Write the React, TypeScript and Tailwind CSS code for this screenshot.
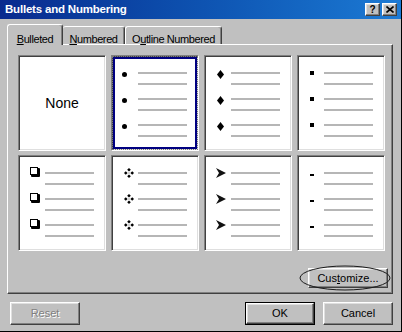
import React from "react";

const Circle = () => <div className="h-[5px] w-[5px] rounded-full bg-black" />;

const Diamond = () => (
  <svg width="7" height="9" viewBox="0 0 7 9" className="block">
    <polygon points="3.5,0 7,4.5 3.5,9 0,4.5" fill="#000" />
  </svg>
);

const SmallSquare = () => <div className="h-[4px] w-[4px] bg-black" />;

const HollowSquare = () => (
  <svg width="10" height="10" viewBox="0 0 10 10" className="block">
    <rect x="1" y="1" width="9" height="9" rx="1" fill="#000" />
    <rect x="0" y="0" width="8" height="8" fill="#000" />
    <rect x="1" y="1" width="6" height="6" fill="#fff" />
  </svg>
);

const FourDots = () => (
  <svg width="10" height="10" viewBox="0 0 10 10" className="block">
    <polygon points="5,0 6.8,1.8 5,3.6 3.2,1.8" fill="#000" />
    <polygon points="1.8,3.2 3.6,5 1.8,6.8 0,5" fill="#000" />
    <polygon points="8.2,3.2 10,5 8.2,6.8 6.4,5" fill="#000" />
    <polygon points="5,6.4 6.8,8.2 5,10 3.2,8.2" fill="#000" />
    <rect x="4.5" y="4.5" width="1" height="1" fill="#555" />
  </svg>
);

const Arrow = () => (
  <svg width="10" height="10" viewBox="0 0 10 10" className="block">
    <polygon points="0,0 10,5 0,10 3,5" fill="#111" />
  </svg>
);

const Dash = () => <div className="h-[2px] w-[4px] bg-black" />;

type CellDef = {
  bullet?: React.ReactNode;
  cls?: string;
  none?: boolean;
  selected?: boolean;
};

const cells: CellDef[] = [
  { none: true },
  { bullet: <Circle />, cls: "ml-[10px] mt-[2px]", selected: true },
  { bullet: <Diamond />, cls: "ml-[12px] mt-[3px]" },
  { bullet: <SmallSquare />, cls: "ml-[12px] -mt-[1px]" },
  { bullet: <HollowSquare />, cls: "ml-[11px] -mt-[2px]" },
  { bullet: <FourDots />, cls: "ml-[12px]" },
  { bullet: <Arrow />, cls: "ml-[11px] -mt-[1px]" },
  { bullet: <Dash />, cls: "ml-[12px] mt-[3px]" },
];

function Cell({ c }: { c: CellDef }) {
  return (
    <div className="relative h-[96px] border border-t-[#808080] border-l-[#808080] border-r-white border-b-white bg-white shadow-[inset_1px_1px_0_#404040,inset_-1px_-1px_0_#dfdfdf]">
      {c.none ? (
        <div className="flex h-full items-center justify-center text-[14px] text-black">None</div>
      ) : (
        <div className="flex flex-col gap-[13px] pt-[16px]">
          {[0, 1, 2].map((i) => (
            <div key={i} className="flex">
              <div className="flex h-[2px] w-[26px] items-center">
                <div className={c.cls}>{c.bullet}</div>
              </div>
              <div className="flex flex-col gap-[9px]">
                <div className="h-[2px] w-[49px] bg-[#b6b6b6]" />
                <div className="h-[2px] w-[49px] bg-[#b6b6b6]" />
              </div>
            </div>
          ))}
        </div>
      )}
      {c.selected && (
        <div className="pointer-events-none absolute inset-0 border border-dotted border-[#7a7a7a]">
          <div className="h-full w-full border-2 border-[#000080]" />
        </div>
      )}
    </div>
  );
}

const raised =
  "border border-t-white border-l-white border-r-[#404040] border-b-[#404040] shadow-[inset_-1px_-1px_0_#808080,inset_1px_1px_0_#dfdfdf] bg-[#c0c0c0]";

export default function App() {
  return (
    <div className="flex h-[332px] w-[402px] flex-col overflow-hidden border-r border-b border-r-black border-b-black bg-[#c0c0c0] font-['Liberation_Sans',Arial,sans-serif] text-[11px] text-black">
      {/* Title bar */}
      <div className="flex h-[19px] shrink-0 items-center bg-linear-to-r from-[#0a2a8e] to-[#1c7ad4] pl-[5px] pr-[4px]">
        <span className="text-[11.5px] font-bold tracking-[-0.2px] text-white">Bullets and Numbering</span>
        <div className="ml-auto flex gap-[2px]">
          <div className={`flex h-[13px] w-[15px] items-center justify-center text-[10px] font-bold leading-none ${raised}`}>
            ?
          </div>
          <div className={`flex h-[13px] w-[15px] items-center justify-center ${raised}`}>
            <svg width="8" height="7" viewBox="0 0 8 7" className="block">
              <path d="M0.5 0.5 L7.5 6.5 M7.5 0.5 L0.5 6.5" stroke="#000" strokeWidth="1.6" />
            </svg>
          </div>
        </div>
      </div>

      {/* Tabs + panel */}
      <div className="px-[7px] pt-[5px]">
        <div className="flex h-[20px] items-end tracking-[-0.4px]">
          <div className="relative z-10 -mb-px flex h-[21px] w-[56px] justify-center rounded-t-[3px] border-l border-t border-r border-l-white border-t-white border-r-[#404040] bg-[#c0c0c0] pt-[6px] shadow-[inset_-1px_0_0_#808080]">
            <span>
              <span className="underline underline-offset-[1px]">B</span>ulleted
            </span>
          </div>
          <div className="flex h-[18px] w-[62px] justify-center rounded-t-[3px] border-t border-r border-t-white border-r-[#404040] pt-[4px] shadow-[inset_-1px_0_0_#808080]">
            <span>
              <span className="underline underline-offset-[1px]">N</span>umbered
            </span>
          </div>
          <div className="flex h-[18px] w-[97px] justify-center rounded-t-[3px] border-l border-t border-r border-l-white border-t-white border-r-[#404040] pt-[4px] shadow-[inset_-1px_0_0_#808080]">
            <span>
              O<span className="underline underline-offset-[1px]">u</span>tline Numbered
            </span>
          </div>
        </div>
        <div className="h-[250px] w-[386px] border border-t-white border-l-white border-r-[#404040] border-b-[#404040] pl-[10px] pt-[10px] shadow-[inset_-1px_-1px_0_#808080]">
          <div className="grid grid-cols-[repeat(4,88px)] gap-x-[5px] gap-y-[4px]">
            {cells.map((c, i) => (
              <Cell key={i} c={c} />
            ))}
          </div>
          <div className="mt-[17px] flex justify-end pr-[4px]">
            <div className="relative">
              <button className={`h-[20px] w-[80px] ${raised} text-[11px]`}>
                Cus<span className="underline underline-offset-[1px]">t</span>omize...
              </button>
              <svg
                width="92"
                height="26"
                viewBox="0 0 92 26"
                className="pointer-events-none absolute -left-[9px] -top-[3px]"
              >
                <ellipse cx="46" cy="13" rx="45" ry="12" fill="none" stroke="#1a1a1a" strokeWidth="1" />
              </svg>
            </div>
          </div>
        </div>
      </div>

      {/* Bottom buttons */}
      <div className="mt-[8px] flex pl-[10px] pr-[8px]">
        <button className={`h-[23px] w-[70px] ${raised} text-[#808080] [text-shadow:1px_1px_0_#fff]`}>Reset</button>
        <div className="flex-1" />
        <button className="h-[23px] w-[70px] border border-black p-0">
          <div className={`h-full w-full ${raised} flex items-center justify-center`}>OK</div>
        </button>
        <button className={`ml-[8px] h-[23px] w-[70px] ${raised}`}>Cancel</button>
      </div>
    </div>
  );
}
